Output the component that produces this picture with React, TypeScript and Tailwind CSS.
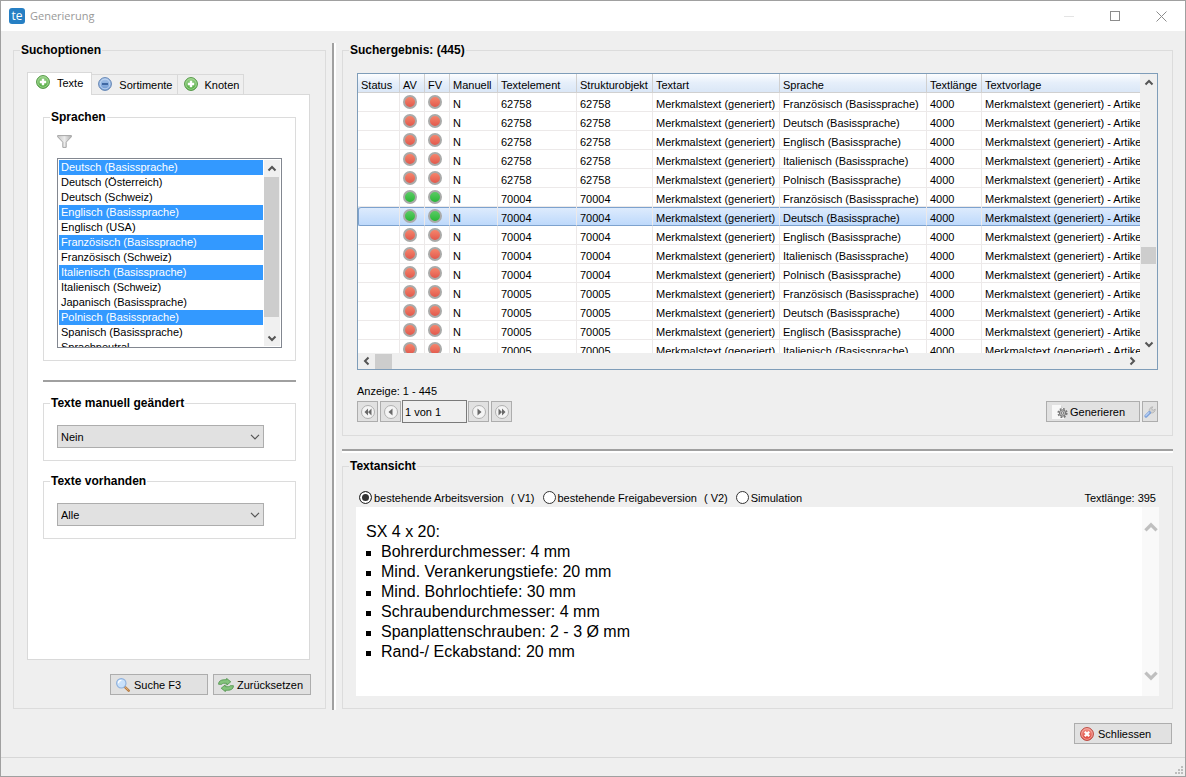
import type { ReactNode } from "react";

const languages = [
  "Deutsch (Basissprache)",
  "Deutsch (Österreich)",
  "Deutsch (Schweiz)",
  "Englisch (Basissprache)",
  "Englisch (USA)",
  "Französisch (Basissprache)",
  "Französisch (Schweiz)",
  "Italienisch (Basissprache)",
  "Italienisch (Schweiz)",
  "Japanisch (Basissprache)",
  "Polnisch (Basissprache)",
  "Spanisch (Basissprache)",
  "Sprachneutral",
];

const selectedLanguages = [
  "Deutsch (Basissprache)",
  "Englisch (Basissprache)",
  "Französisch (Basissprache)",
  "Italienisch (Basissprache)",
  "Polnisch (Basissprache)",
];

type Row = { id: string; lang: string; ok?: boolean; selected?: boolean };

const rows: Row[] = [
  { id: "62758", lang: "Französisch" },
  { id: "62758", lang: "Deutsch" },
  { id: "62758", lang: "Englisch" },
  { id: "62758", lang: "Italienisch" },
  { id: "62758", lang: "Polnisch" },
  { id: "70004", lang: "Französisch", ok: true },
  { id: "70004", lang: "Deutsch", ok: true, selected: true },
  { id: "70004", lang: "Englisch" },
  { id: "70004", lang: "Italienisch" },
  { id: "70004", lang: "Polnisch" },
  { id: "70005", lang: "Französisch" },
  { id: "70005", lang: "Deutsch" },
  { id: "70005", lang: "Englisch" },
  { id: "70005", lang: "Italienisch" },
];

const bullets = [
  "Bohrerdurchmesser: 4 mm",
  "Mind. Verankerungstiefe: 20 mm",
  "Mind. Bohrlochtiefe: 30 mm",
  "Schraubendurchmesser: 4 mm",
  "Spanplattenschrauben: 2 - 3 Ø mm",
  "Rand-/ Eckabstand: 20 mm",
];

function Group({ title, className = "", children }: { title: string; className?: string; children: ReactNode }) {
  return (
    <fieldset className={`flex min-w-0 flex-col border border-[#dcdcdc] px-[6px] ${className}`}>
      <legend className="px-px pt-px text-xs leading-[13px] font-bold">{title}</legend>
      {children}
    </fieldset>
  );
}

function PlusIcon() {
  return (
    <svg viewBox="0 0 14 14" className="size-[14px] shrink-0" aria-hidden="true">
      <defs>
        <linearGradient id="plus" x1="0" y1="0" x2="0" y2="1">
          <stop offset="0" stopColor="#9ad28a" />
          <stop offset="1" stopColor="#4da83c" />
        </linearGradient>
      </defs>
      <circle cx="7" cy="7" r="6.4" fill="url(#plus)" stroke="#4f9442" strokeWidth="1" />
      <circle cx="7" cy="7" r="5.3" fill="none" stroke="#a9dc9b" strokeWidth="0.8" />
      <path d="M7 3.8v6.4M3.8 7h6.4" stroke="#fff" strokeWidth="2.4" />
    </svg>
  );
}

function MinusIcon() {
  return (
    <svg viewBox="0 0 14 14" className="size-[14px] shrink-0" aria-hidden="true">
      <defs>
        <linearGradient id="minus" x1="0" y1="0" x2="0" y2="1">
          <stop offset="0" stopColor="#a9c5ea" />
          <stop offset="1" stopColor="#6c97d2" />
        </linearGradient>
      </defs>
      <circle cx="7" cy="7" r="6.4" fill="url(#minus)" stroke="#6485b3" strokeWidth="1" />
      <circle cx="7" cy="7" r="4.9" fill="none" stroke="#c4d8f2" strokeWidth="0.9" />
      <path d="M4 7h6" stroke="#3f67a3" strokeWidth="2" />
    </svg>
  );
}

function CloseIcon() {
  return (
    <svg viewBox="0 0 14 14" className="size-[14px] shrink-0" aria-hidden="true">
      <defs>
        <linearGradient id="close" x1="0" y1="0" x2="0" y2="1">
          <stop offset="0" stopColor="#f2968c" />
          <stop offset="1" stopColor="#dc4034" />
        </linearGradient>
      </defs>
      <circle cx="7" cy="7" r="6.4" fill="url(#close)" stroke="#b8453c" strokeWidth="1" />
      <circle cx="7" cy="7" r="5.3" fill="none" stroke="#f7b5ae" strokeWidth="0.8" />
      <path d="M4.8 4.8l4.4 4.4M9.2 4.8l-4.4 4.4" stroke="#fff" strokeWidth="2.3" />
    </svg>
  );
}

function FilterIcon() {
  return (
    <svg viewBox="0 0 15 13" className="h-[13px] w-[15px]" aria-hidden="true">
      <defs>
        <linearGradient id="funnel" x1="0" y1="0" x2="1" y2="0">
          <stop offset="0" stopColor="#c6c6c6" />
          <stop offset="0.5" stopColor="#ececec" />
          <stop offset="1" stopColor="#adadad" />
        </linearGradient>
      </defs>
      <path d="M0.6 0.6h13.8v1.2L9.2 7.2v5.2H5.8V7.2L0.6 1.8z" fill="url(#funnel)" stroke="#a6a6a6" strokeWidth="1" />
    </svg>
  );
}

function MagnifierIcon() {
  return (
    <svg viewBox="0 0 14 14" className="size-[14px] shrink-0" aria-hidden="true">
      <path d="M9.3 9.3l3.4 3.4" stroke="#b5793f" strokeWidth="2.4" strokeLinecap="round" />
      <path d="M9.4 9.2l2.8 2.8" stroke="#e6b57c" strokeWidth="1" strokeLinecap="round" />
      <circle cx="5.3" cy="5.3" r="4.7" fill="#c9e1fa" stroke="#8db0dd" strokeWidth="1.1" />
      <path d="M2.4 5.2a3 3 0 0 1 3-2.8" stroke="#fff" strokeWidth="1.2" fill="none" />
    </svg>
  );
}

function ResetIcon() {
  return (
    <svg viewBox="0 0 16 14" className="h-[14px] w-4 shrink-0" aria-hidden="true">
      <g fill="#84c47c" stroke="#4b9046" strokeWidth="0.8" strokeLinejoin="round">
        <path d="M0.6 6.3C0.6 2.600 3.500 1.500 8.600 1.700V0.400l4.200 3.400-4 3.300V5.400C6.200 5.100 4.500 5.200 3.800 6.300z" />
        <path d="M15.400 7.700c0 3.700-2.900 4.800-8 4.600v1.300l-4.200-3.400 4-3.300v1.700c2.600.3 4.300.2 5-.9z" />
      </g>
    </svg>
  );
}

function GenerateIcon() {
  return (
    <svg viewBox="0 0 16 14" className="h-[14px] w-4 shrink-0" aria-hidden="true">
      <path d="M0 0h9l3 3v11H0z" fill="#f8f8f8" />
      <path d="M9 0v3h3z" fill="#d5d5d5" />
      <circle cx="10.5" cy="8" r="4.3" fill="none" stroke="#777" strokeWidth="1.6" strokeDasharray="1.9 1.477" />
      <circle cx="10.5" cy="8" r="3.2" fill="#b9b9b9" stroke="#777" strokeWidth="1" />
      <circle cx="10.5" cy="8" r="1.2" fill="#efefef" stroke="#6b6b6b" strokeWidth="0.8" />
    </svg>
  );
}

function WrenchIcon() {
  return (
    <svg viewBox="0 0 12 12" className="size-3 shrink-0" aria-hidden="true">
      <path
        d="M5.200 5.200C4.900 3.200 6.300 1 8.800 0.800L7.800 2.600l.4 1.200 1.200.4 1.900-1.100c.1 2.400-1.900 4.200-4.300 3.900L6 7.800 4.300 6.100z"
        fill="#d2d2d2"
        stroke="#a3a3a3"
        strokeWidth="0.6"
      />
      <path d="M2 10.100l3.500-3.500" stroke="#7fa3dc" strokeWidth="3.200" strokeLinecap="round" />
      <path d="M1.900 9.600l3-3" stroke="#bfd5f5" strokeWidth="1.100" strokeLinecap="round" />
    </svg>
  );
}

const chevrons = {
  up: "M1.500 6.500L5 3 8.500 6.500",
  down: "M1.500 3.500L5 7 8.500 3.500",
  left: "M6.500 1.500L3 5 6.500 8.500",
  right: "M3.500 1.500L7 5 3.500 8.500",
};

function Chevron({ dir, className = "size-[10px]" }: { dir: keyof typeof chevrons; className?: string }) {
  return (
    <svg viewBox="0 0 10 10" className={className} fill="none" stroke="currentColor" strokeWidth="2" aria-hidden="true">
      <path d={chevrons[dir]} />
    </svg>
  );
}

function DropDown({ label, value, options }: { label: string; value: string; options: string[] }) {
  return (
    <div className="grid w-[207px] items-center">
      <select
        aria-label={label}
        defaultValue={value}
        className="col-start-1 row-start-1 h-[23px] w-full appearance-none border border-[#adadad] bg-[#e1e1e1] pt-px pl-[3px]"
      >
        {options.map((o) => (
          <option key={o}>{o}</option>
        ))}
      </select>
      <svg
        viewBox="0 0 10 6"
        className="pointer-events-none col-start-1 row-start-1 mr-1 h-[6px] w-[10px] justify-self-end"
        fill="none"
        stroke="#555"
        strokeWidth="1.2"
        aria-hidden="true"
      >
        <path d="M1 0.800l4 4 4-4" />
      </svg>
    </div>
  );
}

function Tab({ label, icon, active = false }: { label: string; icon: ReactNode; active?: boolean }) {
  return (
    <button
      type="button"
      role="tab"
      aria-selected={active}
      className={
        active
          ? "-mb-px flex h-[23px] items-center gap-[7px] border border-b-0 border-[#d9d9d9] bg-white pr-[8px] pb-1 pl-2"
          : "flex h-[20px] items-center gap-[7px] border border-b-0 border-l-0 border-[#d9d9d9] pr-[4px] pb-px pl-[6px]"
      }
    >
      {icon}
      <span className="pt-[2px]">{label}</span>
    </button>
  );
}

function Dot({ ok = false }: { ok?: boolean }) {
  return (
    <span
      className={`ml-[3px] block size-[14px] rounded-full border-2 border-[#a9aaa9] bg-linear-to-b bg-origin-border ${
        ok ? "from-[#62cf6c] to-[#12b32a]" : "from-[#f98d72] to-[#dd4f47]"
      }`}
    />
  );
}

const pagerPaths = {
  first: "M11.500 4.500v7L8 8zM8 4.500v7L4.500 8z",
  prev: "M9.500 4.500v7L5.500 8z",
  next: "M6.500 4.500v7l4-3.500z",
  last: "M4.500 4.500v7L8 8zM8 4.500v7l3.500-3.500z",
};

function PagerButton({ kind, label }: { kind: keyof typeof pagerPaths; label: string }) {
  return (
    <button
      type="button"
      aria-label={label}
      className="flex h-[21px] w-[21px] items-center justify-center border border-[#adadad] bg-[#e1e1e1]"
    >
      <svg viewBox="0 0 16 16" className="size-4" aria-hidden="true">
        <circle cx="8" cy="8" r="6.5" fill="#f4f4f4" stroke="#b0b0b0" strokeWidth="1" />
        <path d={pagerPaths[kind]} fill="#6a6a6a" />
      </svg>
    </button>
  );
}

function Radio({ label, version, checked = false }: { label: string; version?: string; checked?: boolean }) {
  return (
    <label className="flex items-center gap-[2px]">
      <input
        type="radio"
        name="version"
        defaultChecked={checked}
        className="size-[13px] appearance-none rounded-full border border-[#333] bg-white checked:bg-[#333] checked:shadow-[inset_0_0_0_2px_#fff]"
      />
      <span className="pt-px">{label}</span>
      {version && <span className="pt-px pl-[5px]">{version}</span>}
    </label>
  );
}

const buttonClass = "flex h-[21px] w-[98px] items-center border border-[#adadad] bg-[#e1e1e1]";
const headClass = "border-r border-b border-[#d0d0d0] p-0 pt-[4px] pl-[3px] text-left align-top font-normal";
const cellClass = "border-r border-b border-[#ece9e9] p-0 pt-[4px] pl-[3px] align-top";
const dotCellClass = "border-r border-b border-[#ece9e9] p-0 pt-[2px] align-top";

export default function App() {
  return (
    <div className="flex min-h-screen flex-col border border-[#a0a0a0] bg-[#efefef] font-['Liberation_Sans',Arial,sans-serif] text-[11px] leading-[14px] text-black">
      <header className="flex h-[30px] items-center bg-white pr-[18px] pl-2 text-[#999]">
        <span className="flex size-4 items-center justify-center rounded-[3px] bg-[#267fc4] pb-px font-['Open_Sans',sans-serif] text-xs leading-4 text-white">
          te
        </span>
        <h1 className="ml-[5px] flex-1 font-['Open_Sans',sans-serif] text-[11px] leading-4">Generierung</h1>
        <div className="flex items-center gap-[35px]">
          <button type="button" aria-label="Minimieren" className="size-[11px]">
            <svg viewBox="0 0 11 11" className="size-[11px]" aria-hidden="true">
              <path d="M0 5.5h10" stroke="#e4e4e4" />
            </svg>
          </button>
          <button type="button" aria-label="Maximieren" className="size-[11px]">
            <svg viewBox="0 0 11 11" className="size-[11px]" aria-hidden="true">
              <rect x="0.5" y="0.5" width="9" height="9" fill="none" stroke="#8c8c8c" />
            </svg>
          </button>
          <button type="button" aria-label="Fenster schließen" className="size-[11px]">
            <svg viewBox="0 0 11 11" className="size-[11px]" aria-hidden="true">
              <path d="M0.5 0.5l10 10M10.5 0.5l-10 10" stroke="#8c8c8c" />
            </svg>
          </button>
        </div>
      </header>

      <main className="flex flex-1 pt-3 pr-3 pl-3">
        <Group title="Suchoptionen" className="mb-px w-[313px] shrink-0 pb-[13px]">
          <div className="flex flex-1 flex-col pt-[15px] pr-[9px] pl-[7px]">
            <div role="tablist" className="z-10 flex items-end">
              <Tab label="Texte" icon={<PlusIcon />} active />
              <Tab label="Sortimente" icon={<MinusIcon />} />
              <Tab label="Knoten" icon={<PlusIcon />} />
            </div>
            <div className="flex flex-1 flex-col border border-[#d9d9d9] bg-white pt-[15px] pr-[13px] pl-[15px]">
              <Group title="Sprachen" className="pb-3">
                <div className="px-[7px] pt-[11px]">
                  <button type="button" aria-label="Filter" className="block">
                    <FilterIcon />
                  </button>
                  <div className="mt-[10px] flex h-[190px] w-[225px] border border-[#828790] bg-white">
                    <select
                      multiple
                      aria-label="Sprachen"
                      defaultValue={selectedLanguages}
                      className="h-full flex-1 overflow-y-auto border-0 bg-white pt-px pl-px [scrollbar-width:none]"
                    >
                      {languages.map((l) => (
                        <option
                          key={l}
                          className="h-[15px] min-h-0 px-[2px] pt-px pb-0 leading-[15px] text-black checked:bg-[#3399ff] checked:text-white"
                        >
                          {l}
                        </option>
                      ))}
                    </select>
                    <div className="m-px flex w-4 flex-col items-center bg-[#f0f0f0] text-[#555]">
                      <span className="flex h-[17px] items-center">
                        <Chevron dir="up" />
                      </span>
                      <span className="h-[140px] w-[15px] self-start bg-[#cdcdcd]" />
                      <span className="mt-auto flex h-[17px] items-center">
                        <Chevron dir="down" />
                      </span>
                    </div>
                  </div>
                </div>
              </Group>
              <hr className="mt-[19px] border-0 border-t-2 border-[#a0a0a0]" />
              <Group title="Texte manuell geändert" className="mt-[14px] pb-3">
                <div className="px-[7px] pt-[15px]">
                  <DropDown label="Texte manuell geändert" value="Nein" options={["Alle", "Ja", "Nein"]} />
                </div>
              </Group>
              <Group title="Texte vorhanden" className="mt-[13px] pb-3">
                <div className="px-[7px] pt-[15px]">
                  <DropDown label="Texte vorhanden" value="Alle" options={["Alle", "Ja", "Nein"]} />
                </div>
              </Group>
            </div>
            <div className="mt-[14px] flex justify-end gap-[5px]">
              <button type="button" className={`${buttonClass} gap-[4px] pl-[5px]`}>
                <MagnifierIcon />
                <span className="pt-px">Suche F3</span>
              </button>
              <button type="button" className={`${buttonClass} -mr-px gap-[3px] pl-1`}>
                <ResetIcon />
                <span className="pt-px">Zurücksetzen</span>
              </button>
            </div>
          </div>
        </Group>

        <div className="ml-[6px] w-1 shrink-0 border-r-2 border-l-2 border-r-white border-l-[#a0a0a0]" />

        <div className="ml-[6px] flex min-w-0 flex-1 flex-col">
          <Group title="Suchergebnis: (445)" className="pb-3">
            <div className="flex flex-col px-2 pt-4">
              <div className="flex flex-col border border-[#7f9db9] bg-[#efefef]">
                <div className="flex">
                  <div className="h-[279px] min-w-0 flex-1 overflow-hidden bg-white">
                    <table className="w-full table-fixed border-separate border-spacing-0 whitespace-nowrap">
                      <colgroup>
                        <col className="w-[42px]" />
                        <col className="w-[25px]" />
                        <col className="w-[25px]" />
                        <col className="w-[48px]" />
                        <col className="w-[79px]" />
                        <col className="w-[76px]" />
                        <col className="w-[127px]" />
                        <col className="w-[147px]" />
                        <col className="w-[55px]" />
                        <col />
                      </colgroup>
                      <thead>
                        <tr className="h-[19px] bg-linear-to-b from-[#fdfeff] via-[#e6effa] via-45% to-[#d9e6f6]">
                          <th className={headClass}>Status</th>
                          <th className={headClass}>AV</th>
                          <th className={headClass}>FV</th>
                          <th className={headClass}>Manuell</th>
                          <th className={headClass}>Textelement</th>
                          <th className={headClass}>Strukturobjekt</th>
                          <th className={headClass}>Textart</th>
                          <th className={headClass}>Sprache</th>
                          <th className={headClass}>Textlänge</th>
                          <th className={`${headClass} border-r-0`}>Textvorlage</th>
                        </tr>
                      </thead>
                      <tbody>
                        {rows.map((r, i) => (
                          <tr
                            key={i}
                            className={
                              r.selected
                                ? "h-[19px] bg-linear-to-b from-[#dfecfd] to-[#bcd8fb] [&>td]:border-b-[#7da2ce] [&>td]:shadow-[inset_0_1px_0_#7da2ce] [&>td:first-child]:rounded-l-[2px] [&>td:first-child]:border-l [&>td:first-child]:border-l-[#7da2ce]"
                                : "h-[19px]"
                            }
                          >
                            <td className={cellClass} />
                            <td className={dotCellClass}>
                              <Dot ok={r.ok} />
                            </td>
                            <td className={dotCellClass}>
                              <Dot ok={r.ok} />
                            </td>
                            <td className={cellClass}>N</td>
                            <td className={cellClass}>{r.id}</td>
                            <td className={cellClass}>{r.id}</td>
                            <td className={cellClass}>Merkmalstext (generiert)</td>
                            <td className={cellClass}>{r.lang} (Basissprache)</td>
                            <td className={cellClass}>4000</td>
                            <td className={`${cellClass} border-r-0`}>Merkmalstext (generiert) - Artike</td>
                          </tr>
                        ))}
                      </tbody>
                    </table>
                  </div>
                  <div className="flex w-[17px] shrink-0 flex-col items-center bg-[#efefef] text-[#555]">
                    <span className="flex h-[18px] items-center">
                      <Chevron dir="up" />
                    </span>
                    <span className="mt-[155px] h-[17px] w-[15px] bg-[#cdcdcd]" />
                    <span className="mt-auto flex h-[18px] items-center">
                      <Chevron dir="down" />
                    </span>
                  </div>
                </div>
                <div className="mr-[17px] flex h-4 items-center text-[#555]">
                  <span className="flex w-[17px] justify-center">
                    <Chevron dir="left" />
                  </span>
                  <span className="h-[15px] w-[17px] bg-[#cdcdcd]" />
                  <span className="ml-auto flex w-[17px] justify-center">
                    <Chevron dir="right" />
                  </span>
                </div>
              </div>
              <p className="mt-[14px]">Anzeige: 1 - 445</p>
              <div className="mt-[2px] flex items-center gap-[2px]">
                <PagerButton kind="first" label="Erste Seite" />
                <PagerButton kind="prev" label="Vorherige Seite" />
                <input
                  aria-label="Seite"
                  defaultValue="1 von 1"
                  className="-mx-px h-[23px] w-[65px] border border-[#7a7a7a] bg-[#efefef] pl-[2px]"
                />
                <PagerButton kind="next" label="Nächste Seite" />
                <PagerButton kind="last" label="Letzte Seite" />
                <button
                  type="button"
                  className="ml-auto flex h-[21px] w-[94px] items-center gap-[2px] border border-[#adadad] bg-[#e1e1e1] pl-[5px]"
                >
                  <GenerateIcon />
                  <span className="pt-px">Generieren</span>
                </button>
                <button
                  type="button"
                  aria-label="Einstellungen"
                  className="flex h-[21px] w-4 items-center justify-center border border-[#adadad] bg-[#e1e1e1]"
                >
                  <WrenchIcon />
                </button>
              </div>
            </div>
          </Group>

          <hr className="mt-[13px] h-1 border-0 border-t-2 border-t-[#a0a0a0] bg-white" />

          <Group title="Textansicht" className="mt-[6px] mb-px flex-1 pb-3">
            <div className="flex flex-1 flex-col pt-[17px] pr-[7px] pl-[7px]">
              <div className="flex items-center gap-2 pr-[3px] pl-[3px]">
                <Radio label="bestehende Arbeitsversion" version="( V1)" checked />
                <Radio label="bestehende Freigabeversion" version="( V2)" />
                <Radio label="Simulation" />
                <span className="ml-auto pt-px">Textlänge: 395</span>
              </div>
              <div className="mt-[2px] flex flex-1 bg-white">
                <div className="flex-1 pt-[15px] pl-[10px] text-base leading-5">
                  <p>SX 4 x 20:</p>
                  <ul>
                    {bullets.map((b) => (
                      <li key={b} className="flex items-center gap-[10px]">
                        <span className="mt-[2px] size-[5px] bg-black" />
                        {b}
                      </li>
                    ))}
                  </ul>
                </div>
                <div className="flex w-[17px] flex-col items-center justify-between bg-[#f9f9f9] py-[13px] text-[#bfbfbf]">
                  <Chevron dir="up" className="size-4" />
                  <Chevron dir="down" className="size-4" />
                </div>
              </div>
            </div>
          </Group>
        </div>
      </main>

      <div className="flex justify-end py-[13px] pr-[13px]">
        <button type="button" className={`${buttonClass} gap-[4px] pl-[5px]`}>
          <CloseIcon />
          <span className="pt-px">Schliessen</span>
        </button>
      </div>

      <footer className="flex h-[19px] items-end justify-end border-t border-[#d7d7d7]">
        <svg viewBox="0 0 10 10" className="size-[10px]" fill="#bdbdbd" aria-hidden="true">
          <path d="M6 0h2v2H6zM6 3h2v2H6zM3 3h2v2H3zM6 6h2v2H6zM3 6h2v2H3zM0 6h2v2H0z" />
        </svg>
      </footer>
    </div>
  );
}
